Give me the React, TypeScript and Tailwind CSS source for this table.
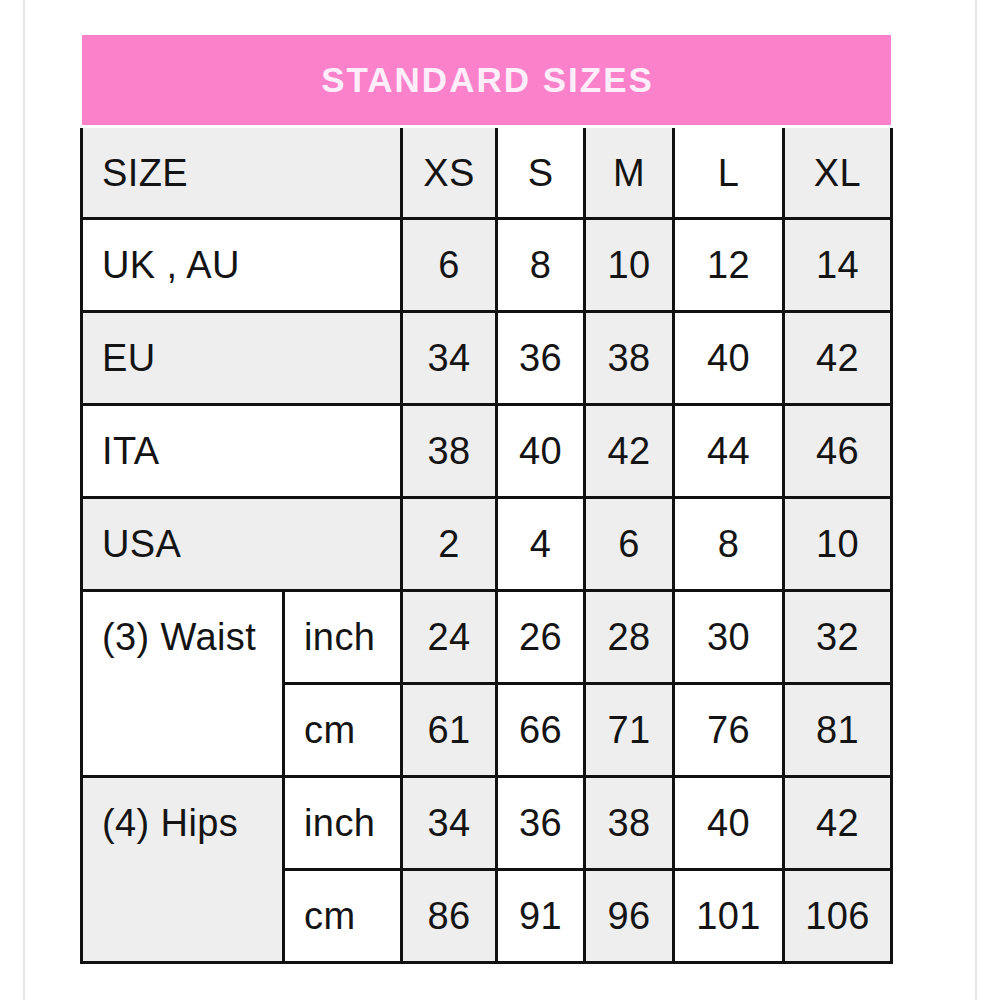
import React from "react";

const font = { fontFamily: '"Liberation Sans", Arial, sans-serif' };

const GRAY = "bg-[#eeeeee]";
const WHITE = "bg-white";

const sizeCols = [GRAY, WHITE, GRAY, WHITE, GRAY];

const simpleRows: { label: string; bg: string; values: string[] }[] = [
  { label: "SIZE", bg: GRAY, values: ["XS", "S", "M", "L", "XL"] },
  { label: "UK , AU", bg: WHITE, values: ["6", "8", "10", "12", "14"] },
  { label: "EU", bg: GRAY, values: ["34", "36", "38", "40", "42"] },
  { label: "ITA", bg: WHITE, values: ["38", "40", "42", "44", "46"] },
  { label: "USA", bg: GRAY, values: ["2", "4", "6", "8", "10"] },
];

const measureRows: { label: string; bg: string; inch: string[]; cm: string[] }[] = [
  {
    label: "(3) Waist",
    bg: WHITE,
    inch: ["24", "26", "28", "30", "32"],
    cm: ["61", "66", "71", "76", "81"],
  },
  {
    label: "(4) Hips",
    bg: GRAY,
    inch: ["34", "36", "38", "40", "42"],
    cm: ["86", "91", "96", "101", "106"],
  },
];

function ValueCells({ values }: { values: string[] }) {
  return (
    <>
      {values.map((v, i) => (
        <div
          key={i}
          className={`${sizeCols[i]} flex items-center justify-center`}
        >
          {v}
        </div>
      ))}
    </>
  );
}

export default function App() {
  return (
    <div className="w-[1000px] h-[1000px] bg-white flex" style={font}>
      <div className="ml-[23px] w-[954px] h-full border-x-2 border-[#e6e6e6] pt-[35px] pl-[55px]">
        <div className="w-[813px] flex flex-col">
          <div className="mx-[2px] h-[90px] bg-[#fb82ca] flex items-center justify-center">
            <span className="text-[35px] font-bold tracking-[2px] text-[#fdeefa] pl-[2px]">
              STANDARD SIZES
            </span>
          </div>
          <div className="mt-[3px] bg-[#111111] px-[3px] pb-[3px] grid grid-cols-[199px_115px_92px_85px_86px_107px_105px] grid-rows-[89px_repeat(8,90px)] gap-[3px] text-[38px] tracking-[0.4px] text-[#141414] leading-none">
            {simpleRows.map((r, ri) => (
              <React.Fragment key={ri}>
                <div className={`${r.bg} col-span-2 flex items-center pl-[19px]`}>
                  {r.label}
                </div>
                <ValueCells values={r.values} />
              </React.Fragment>
            ))}
            {measureRows.map((m, mi) => (
              <React.Fragment key={mi}>
                <div className={`${m.bg} row-span-2 flex flex-col`}>
                  <div className="h-[90px] flex items-center pl-[19px]">
                    {m.label}
                  </div>
                </div>
                <div className="bg-white flex items-center pl-[19px]">inch</div>
                <ValueCells values={m.inch} />
                <div className="bg-white flex items-center pl-[19px]">cm</div>
                <ValueCells values={m.cm} />
              </React.Fragment>
            ))}
          </div>
        </div>
      </div>
    </div>
  );
}
